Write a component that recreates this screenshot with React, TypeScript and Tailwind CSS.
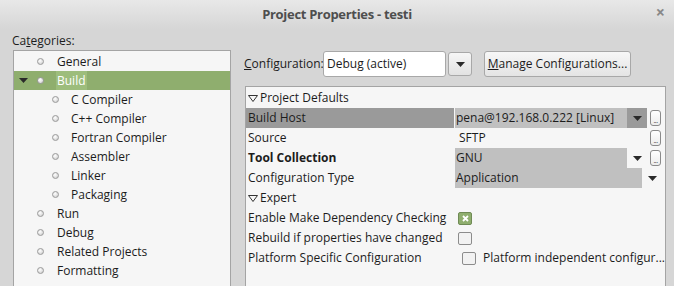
import React from "react";

const Bullet: React.FC = () => (
  <span className="inline-block w-[7px] h-[7px] rounded-full border border-[#9a9a9a] bg-[radial-gradient(circle_at_40%_35%,#ffffff,#c8c8c8)]" />
);

const DownTri: React.FC<{ className?: string }> = ({ className }) => (
  <svg width="9" height="5" viewBox="0 0 9 5" className={className}>
    <path d="M0 0 H9 L4.5 5 Z" fill="#2a2a2a" />
  </svg>
);

const HollowTri: React.FC = () => (
  <svg width="10" height="7" viewBox="0 0 10 7" className="mr-[2px]">
    <path d="M0.5 0.5 H9.5 L5 6.5 Z" fill="none" stroke="#333" strokeWidth="1" />
  </svg>
);

const Ellipsis: React.FC = () => (
  <div className="w-[11px] h-[16px] rounded-[3px] border border-[#8a8a8a] bg-gradient-to-b from-white to-[#ececec] flex items-end justify-center pb-[1px] ml-[3px]">
    <span className="text-[7px] leading-[7px] text-[#333] tracking-[-0.5px]">...</span>
  </div>
);

const Check: React.FC<{ checked?: boolean }> = ({ checked }) =>
  checked ? (
    <div className="w-[14px] h-[13px] rounded-[2px] border border-[#6f8a55] bg-[#8fae6e] flex items-center justify-center">
      <svg width="7" height="7" viewBox="0 0 7 7">
        <path d="M1 1 L6 6 M6 1 L1 6" stroke="#fff" strokeWidth="1.8" />
      </svg>
    </div>
  ) : (
    <div className="w-[14px] h-[13px] rounded-[2px] border border-[#8c8c8c] bg-[#f2f2f2]" />
  );

const tree = [
  { label: "General", level: 0 },
  { label: "Build", level: 0, selected: true, open: true },
  { label: "C Compiler", level: 1 },
  { label: "C++ Compiler", level: 1 },
  { label: "Fortran Compiler", level: 1 },
  { label: "Assembler", level: 1 },
  { label: "Linker", level: 1 },
  { label: "Packaging", level: 1 },
  { label: "Run", level: 0 },
  { label: "Debug", level: 0 },
  { label: "Related Projects", level: 0 },
  { label: "Formatting", level: 0 },
];

export default function App() {
  return (
    <div
      className="w-[674px] h-[286px] overflow-hidden bg-[#d6d6d6] text-[12px] text-[#1c1c1c]"
      style={{ fontFamily: '"Open Sans", "Noto Sans", sans-serif' }}
    >
      {/* title bar */}
      <div className="relative h-[29px] flex items-center justify-center bg-gradient-to-b from-[#e8e8e8] to-[#d6d6d6]">
        <span className="text-[13px] font-bold text-[#4e4e4e] tracking-[-0.3px]">Project Properties - testi</span>
        <span className="absolute right-[9px] top-[5px] text-[16px] font-bold text-[#888] leading-[15px]">×</span>
      </div>

      <div className="flex">
        {/* categories */}
        <div className="pl-[12px] w-[232px] shrink-0">
          <div className="h-[21px] leading-[21px] pt-[1px]">
            Ca<span className="underline">t</span>egories:
          </div>
          <div className="ml-[1px] w-[218px] h-[260px] border border-[#a4a4a4] bg-[#f6f6f6] pt-[1px]">
            {tree.map((t) => (
              <div
                key={t.label}
                className={`h-[19px] flex items-center ${t.selected ? "bg-[#8fae6e]" : ""}`}
              >
                <div className="w-[22px] flex justify-center pr-[3px]">
                  {t.open && <DownTri />}
                </div>
                <div className={`${t.level === 1 ? "w-[35px] pr-[12px]" : "w-[21px] pr-[13px]"} flex justify-end`}>
                  <Bullet />
                </div>
                <span
                  className={`${t.selected ? "bg-[#9dbd7c] text-white px-[1px] -ml-[1px]" : ""} leading-[19px]`}
                >
                  {t.label}
                </span>
              </div>
            ))}
          </div>
        </div>

        {/* right side */}
        <div className="flex-1 pl-[12px] pt-[22px] pr-[8px]">
          <div className="flex items-center h-[26px]">
            <span className="w-[79px]">
              <span className="underline">C</span>onfiguration:
            </span>
            <div className="w-[123px] h-[26px] bg-white border border-[#a8a8a8] rounded-[3px] flex items-center pl-[3px]">
              Debug (active)
            </div>
            <div className="ml-[2px] w-[24px] h-[24px] border border-[#a8a8a8] rounded-[3px] bg-gradient-to-b from-[#f6f6f6] to-[#e2e2e2] flex items-center justify-center">
              <DownTri />
            </div>
            <div className="ml-[12px] w-[147px] h-[26px] border border-[#a8a8a8] rounded-[3px] bg-gradient-to-b from-[#f7f7f7] to-[#e4e4e4] flex items-center justify-center">
              <span>
                <span className="underline">M</span>anage Configurations...
              </span>
            </div>
          </div>

          <div className="mt-[9px] ml-[1px] w-[421px] h-[210px] border border-[#a4a4a4] bg-[#f6f6f6] pt-[1px]">
            <div className="h-[20px] flex items-center pl-[2px]">
              <HollowTri />
              Project Defaults
            </div>
            <div className="h-[20px] flex items-stretch">
              <div className="w-[208px] bg-[#9a9a9a] flex items-center pl-[2px]">Build Host</div>
              <div className="w-[1px]" />
              <div className="w-[172px] bg-[#c0c0c0] flex items-center pl-[1px]">pena@192.168.0.222 [Linux]</div>
              <div className="w-[20px] bg-[#9a9a9a] flex items-center justify-center">
                <DownTri />
              </div>
              <div className="flex items-center">
                <Ellipsis />
              </div>
            </div>
            <div className="h-[20px] flex items-center">
              <div className="w-[209px] pl-[2px]">Source</div>
              <div className="w-[192px] pl-[4px]">SFTP</div>
              <Ellipsis />
            </div>
            <div className="h-[20px] flex items-stretch">
              <div className="w-[209px] pl-[2px] flex items-center font-bold">Tool Collection</div>
              <div className="w-[172px] bg-[#c0c0c0] flex items-center pl-[1px]">GNU</div>
              <div className="w-[20px] flex items-center justify-center">
                <DownTri />
              </div>
              <div className="flex items-center">
                <Ellipsis />
              </div>
            </div>
            <div className="h-[20px] flex items-stretch">
              <div className="w-[209px] pl-[2px] flex items-center">Configuration Type</div>
              <div className="w-[187px] bg-[#c0c0c0] flex items-center pl-[1px]">Application</div>
              <div className="w-[20px] flex items-center justify-center">
                <DownTri />
              </div>
            </div>
            <div className="h-[20px] flex items-center pl-[2px]">
              <HollowTri />
              Expert
            </div>
            <div className="h-[20px] flex items-center">
              <div className="w-[212px] pl-[2px]">Enable Make Dependency Checking</div>
              <Check checked />
            </div>
            <div className="h-[20px] flex items-center">
              <div className="w-[212px] pl-[2px]">Rebuild if properties have changed</div>
              <Check />
            </div>
            <div className="h-[20px] flex items-center">
              <div className="w-[216px] pl-[2px]">Platform Specific Configuration</div>
              <Check />
              <span className="ml-[7px]">Platform independent configur...</span>
            </div>
          </div>
        </div>
      </div>
    </div>
  );
}
